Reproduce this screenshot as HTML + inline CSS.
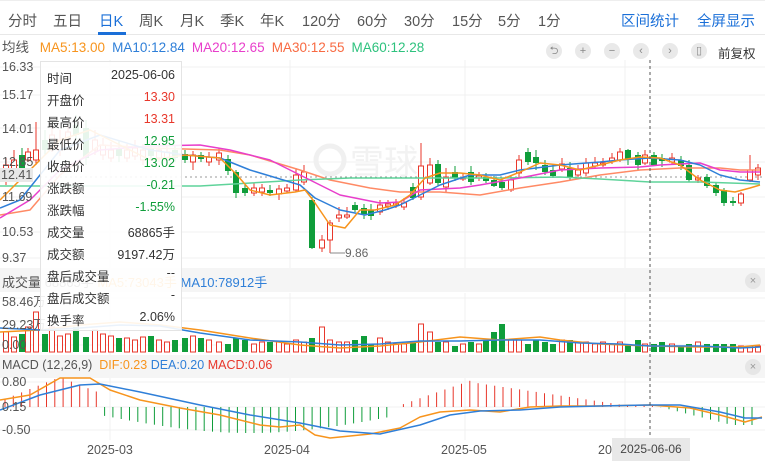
<!DOCTYPE html>
<html><head><meta charset="utf-8"><style>
*{margin:0;padding:0;box-sizing:border-box}
body{width:765px;height:468px;background:#fff;font-family:"Liberation Sans","Noto Sans CJK SC",sans-serif;position:relative;overflow:hidden;color:#333}
.tabs{position:absolute;left:0;top:0;width:765px;height:35px;border-bottom:1px solid #e8e8e8;border-top:1px solid #eee}
.tabs span{position:absolute;top:9px;font-size:14.5px;color:#555}
.tabs .act{color:#1a6fd8}
.tabs .r{color:#1a6fd8}
.ma{position:absolute;top:36px;left:0;font-size:13.5px;white-space:nowrap}
.ma span{margin-right:7px}
.lbl{position:absolute;font-size:12.5px;color:#555;left:2px}
.band{position:absolute;left:0;width:765px;background:#f5f5f5}
.tip{position:absolute;left:40px;top:61px;width:142px;height:270px;background:rgba(255,255,255,0.9);border:1px solid #e4e4e4;font-size:12.5px}
.tip div{position:absolute;left:6px;right:6px;height:18px}
.tip b{font-weight:normal;position:absolute;right:0}
.btn{position:absolute;top:43px;width:16px;height:16px;border-radius:8px;background:#e9e9e9;font-size:11px;color:#888;text-align:center;line-height:16px}
.x{position:absolute;width:16px;height:16px;border-radius:8px;background:#e6e6e6;color:#999;font-size:11px;text-align:center;line-height:16px;left:745px}
</style></head><body>
<div class="tabs">
<span style="left:8px">分时</span><span style="left:53px">五日</span><span class="act" style="left:99px">日K</span>
<span style="left:139px">周K</span><span style="left:180px">月K</span><span style="left:220px">季K</span><span style="left:260px">年K</span>
<span style="left:302px">120分</span><span style="left:357px">60分</span><span style="left:404px">30分</span><span style="left:452px">15分</span><span style="left:498px">5分</span><span style="left:538px">1分</span>
<span class="r" style="left:621px">区间统计</span><span class="r" style="left:697px">全屏显示</span>
<div style="position:absolute;left:98px;top:31px;width:28px;height:3px;background:#1a6fd8"></div>
</div>
<div class="ma"><span style="color:#555;margin-left:2px">均线</span> <span style="color:#f7941d">MA5:13.00</span><span style="color:#2f7fd8">MA10:12.84</span><span style="color:#e83ecb">MA20:12.65</span><span style="color:#f86a42">MA30:12.55</span><span style="color:#2ec27e">MA60:12.28</span></div>
<div class="btn" style="left:546px">⮌</div><div class="btn" style="left:575px">+</div><div class="btn" style="left:604px">−</div><div class="btn" style="left:633px">‹</div><div class="btn" style="left:662px">›</div><div class="btn" style="left:691px">▯</div>
<div style="position:absolute;left:718px;top:43px;font-size:12.5px;color:#333">前复权</div>

<div class="band" style="top:268px;height:24px"></div>
<div class="band" style="top:355px;height:23px"></div>
<svg id="sv" width="765" height="468" style="position:absolute;left:0;top:0"></svg>

<div class="lbl" style="top:60px">16.33</div>
<div class="lbl" style="top:88px">15.17</div>
<div class="lbl" style="top:122px">14.01</div>
<div class="lbl" style="top:155px">12.85</div>
<div class="lbl" style="top:168px;background:#e8e8e8;padding:0 1px;left:0">12.41</div>
<div class="lbl" style="top:190px">11.69</div>
<div class="lbl" style="top:225px">10.53</div>
<div class="lbl" style="top:251px">9.37</div>
<div style="position:absolute;left:345px;top:246px;font-size:12px;color:#666">9.86</div>
<div style="position:absolute;left:2px;top:272px;font-size:13px;white-space:nowrap;color:#555">成交量 68865手 <span style="color:#f7941d">MA5:73043手</span> <span style="color:#2f7fd8">MA10:78912手</span></div>
<div class="x" style="top:273px">×</div>
<div class="lbl" style="top:291px">58.46万</div>
<div class="lbl" style="top:314px">29.23万</div>
<div class="lbl" style="top:338px">0.00</div>
<div style="position:absolute;left:2px;top:358px;font-size:12.5px;white-space:nowrap;color:#555">MACD (12,26,9) &nbsp;<span style="color:#f7941d">DIF:0.23</span> <span style="color:#2f7fd8">DEA:0.20</span> <span style="color:#e8372b">MACD:0.06</span></div>
<div class="x" style="top:359px">×</div>
<div class="lbl" style="top:375px">0.80</div>
<div class="lbl" style="top:400px">0.15</div>
<div class="lbl" style="top:423px">-0.50</div>
<div class="lbl" style="top:443px;left:87px">2025-03</div>
<div class="lbl" style="top:443px;left:264px">2025-04</div>
<div class="lbl" style="top:443px;left:441px">2025-05</div>
<div class="lbl" style="top:443px;left:598px">20</div>
<div style="position:absolute;left:612px;top:438px;width:78px;height:23px;background:#e8e8e8;font-size:12px;color:#444;line-height:23px;text-align:center">2025-06-06</div>

<div class="tip">
<div style="top:6px">时间<b style="color:#333">2025-06-06</b></div>
<div style="top:28px">开盘价<b style="color:#e8372b">13.30</b></div>
<div style="top:50px">最高价<b style="color:#e8372b">13.31</b></div>
<div style="top:72px">最低价<b style="color:#0f9d3a">12.95</b></div>
<div style="top:94px">收盘价<b style="color:#0f9d3a">13.02</b></div>
<div style="top:116px">涨跌额<b style="color:#0f9d3a">-0.21</b></div>
<div style="top:138px">涨跌幅<b style="color:#0f9d3a">-1.55%</b></div>
<div style="top:160px">成交量<b>68865手</b></div>
<div style="top:182px">成交额<b>9197.42万</b></div>
<div style="top:204px">盘后成交量<b>--</b></div>
<div style="top:226px">盘后成交额<b>-</b></div>
<div style="top:248px">换手率<b>2.06%</b></div>
</div>

<script>
var s='';
function L(x1,y1,x2,y2,c,w,d){s+='<line x1="'+x1+'" y1="'+y1+'" x2="'+x2+'" y2="'+y2+'" stroke="'+c+'" stroke-width="'+(w||1)+'"'+(d?' stroke-dasharray="'+d+'"':'')+'/>';}
function P(pts,c){s+='<polyline fill="none" stroke="'+c+'" stroke-width="1.5" stroke-linejoin="round" points="'+pts.map(function(p){return p.join(',')}).join(' ')+'"/>';}
[67,95,128,162,197,232,258].forEach(function(y){L(0,y,765,y,'#f0f0f0');});
[298,321,345].forEach(function(y){L(0,y,765,y,'#f0f0f0');});
[382,407,430].forEach(function(y){L(0,y,765,y,'#f0f0f0');});
[110,290,465,625].forEach(function(x){L(x,60,x,268,'#f0f0f0');L(x,293,x,355,'#f0f0f0');L(x,378,x,440,'#f0f0f0');});
L(40,177,765,177,'#999',1,'2,3');
s+='<circle cx="330" cy="160" r="14" fill="none" stroke="#f0f0f0" stroke-width="5"/><text x="350" y="174" font-size="34" fill="#f2f2f2" font-family="Noto Sans CJK SC">雪球</text>';
var C=[[6,165,180,'r',158,185],[14,160,172,'r',150,176],[22,155,168,'g',148,172],[28,152,160,'r',148,162],[36,150,160,'r',122,165],[45,140,150,'g',130,155],[52,135,148,'r',125,152],[60,140,150,'r',130,156],[68,132,140,'r',125,145],[76,125,135,'g',115,140],[86,128,158,'g',120,165],[95,140,150,'r',130,155],[103,145,155,'r',138,160],[111,150,158,'r',142,162],[119,148,156,'g',140,162],[127,150,158,'r',144,162],[135,148,156,'r',140,160],[143,150,160,'r',144,165],[151,148,156,'g',140,160],[159,150,158,'r',144,162],[167,152,160,'r',146,166],[175,150,158,'g',145,162],[185,154,160,'g',150,163],[193,155,162,'r',151,170],[201,155,159,'g',152,162],[209,157,162,'r',152,166],[219,153,160,'r',148,165],[228,159,171,'g',155,175],[236,172,193,'g',170,198],[245,188,193,'g',184,196],[254,188,193,'r',183,196],[262,188,192,'r',184,196],[270,190,193,'g',185,196],[279,189,194,'r',185,200],[287,188,191,'r',184,193],[296,175,190,'r',168,192],[304,172,182,'r',165,185],[312,200,248,'g',197,249],[322,240,248,'r',235,252],[330,223,240,'r',220,253],[339,215,218,'r',207,222],[347,215,217,'r',207,219],[355,205,210,'g',202,212],[364,208,214,'g',204,219],[371,210,216,'g',204,220],[380,205,212,'r',200,215],[388,204,206,'r',200,210],[396,203,205,'r',199,208],[404,203,207,'r',198,210],[413,187,198,'g',183,200],[421,166,197,'r',143,200],[430,165,183,'r',158,185],[438,164,183,'g',160,186],[446,177,187,'r',168,192],[455,172,178,'g',166,181],[463,178,179,'r',173,181],[471,172,182,'g',166,185],[479,176,178,'r',172,181],[486,177,181,'g',173,183],[494,180,186,'g',176,187],[502,182,188,'g',178,190],[511,180,190,'r',177,192],[519,160,173,'r',155,178],[528,152,162,'g',148,165],[536,157,163,'g',150,170],[545,165,172,'g',160,175],[553,170,176,'g',165,178],[562,164,169,'r',158,172],[570,168,178,'g',162,180],[578,170,175,'r',165,177],[586,163,173,'r',158,176],[595,163,166,'r',157,168],[603,163,165,'r',158,167],[612,158,161,'r',153,164],[620,152,160,'r',148,162],[628,150,160,'g',149,165],[638,155,165,'g',152,170],[645,155,163,'r',150,165],[654,155,165,'g',152,166],[662,158,161,'g',154,167],[672,158,162,'r',153,165],[681,160,166,'g',156,170],[689,165,180,'g',160,182],[698,178,180,'r',175,183],[707,177,186,'g',174,188],[716,185,193,'g',182,196],[724,190,203,'g',188,206],[733,201,203,'g',197,206],[741,194,203,'r',192,206],[750,170,180,'r',155,182],[758,168,175,'r',164,180]];
var R='#e8372b',G='#0f9d3a';
C.forEach(function(c){var col=c[3]=='r'?R:G;L(c[0],c[4],c[0],c[5],col);
 if(c[3]=='r')s+='<rect x="'+(c[0]-2.5)+'" y="'+c[1]+'" width="5" height="'+Math.max(1,c[2]-c[1])+'" fill="#fff" stroke="'+R+'"/>';
 else s+='<rect x="'+(c[0]-3)+'" y="'+c[1]+'" width="6" height="'+Math.max(1,c[2]-c[1])+'" fill="'+G+'"/>';
});
L(330,253,345,253,'#888');
P([[0,215],[30,210],[60,175],[100,145],[150,148],[220,150],[250,155],[300,170],[330,180],[370,188],[400,192],[440,192],[480,195],[520,188],[560,182],[600,175],[640,170],[680,168],[720,168],[740,170],[760,170]],'#ff8a65');
P([[0,186],[100,186],[200,186],[300,180],[350,178],[400,178],[450,178],[500,178],[560,177],[600,179],[650,182],[700,182],[760,184]],'#5fd39a');
P([[0,218],[30,200],[60,170],[100,150],[150,146],[200,145],[230,150],[270,160],[310,180],[340,195],[380,203],[400,202],[420,190],[460,188],[480,185],[520,178],[560,170],[600,168],[640,167],[660,165],[700,163],[720,170],[740,172],[760,172]],'#e83ecb');
P([[0,208],[20,200],[60,150],[100,135],[150,150],[185,155],[220,158],[250,170],[300,185],[315,198],[340,210],[365,215],[385,210],[400,205],[420,195],[440,185],[470,175],[500,175],[520,170],[560,165],[600,162],[620,160],[650,158],[680,160],[700,165],[720,175],[740,180],[760,182]],'#2f7fd8');
P([[0,200],[30,170],[60,140],[90,130],[120,145],[150,160],[185,155],[220,158],[237,175],[250,190],[270,195],[295,192],[305,190],[313,200],[330,225],[345,228],[360,210],[375,210],[395,205],[410,195],[425,178],[440,173],[460,173],[480,175],[500,180],[520,172],[540,163],[560,165],[580,170],[600,165],[620,160],[640,157],[660,158],[680,165],[700,180],[720,190],[735,192],[750,188],[760,185]],'#f7941d');
var hs=[20,15,18,25,40,18,25,16,18,25,15,22,18,16,14,14,12,15,16,12,10,12,14,16,14,12,10,8,14,12,8,10,10,10,8,12,10,14,25,12,10,10,12,16,8,14,10,8,8,10,28,20,10,10,6,8,10,8,12,20,28,12,12,8,12,10,8,12,12,10,10,8,10,8,10,8,12,8,8,10,8,6,8,10,8,8,8,8,6,6,6,6,6,6,6,12,8];
C.forEach(function(c,i){var h=hs[i]||8;
 if(c[3]=='r')s+='<rect x="'+(c[0]-2.5)+'" y="'+(352-h)+'" width="5" height="'+h+'" fill="#fff" stroke="'+R+'"/>';
 else s+='<rect x="'+(c[0]-3)+'" y="'+(352-h)+'" width="6" height="'+h+'" fill="'+G+'"/>';});
P([[0,332],[40,330],[80,325],[120,322],[160,325],[200,330],[250,338],[300,345],[340,348],[380,346],[420,342],[460,337],[500,340],[540,337],[560,340],[600,344],[650,346],[700,347],[740,347],[760,345]],'#f7941d');
P([[0,328],[40,330],[80,328],[120,325],[160,326],[200,333],[250,340],[300,342],[340,345],[380,344],[420,341],[460,341],[500,340],[540,340],[580,343],[620,344],[650,346],[700,346],[740,348],[760,347]],'#2f7fd8');
for(var x=5;x<760;x+=8.3){var v;
 if(x<100)v=-(30-Math.abs(x-60)*0.4);else if(x<395)v=8+Math.sin((x-100)/300*Math.PI)*18;else if(x<650)v=-(x<470?(x-395)*0.35:Math.max(2,25-(x-470)*0.15));else v=Math.min(18,(x-660)*0.25);
 L(x.toFixed(1),407,x.toFixed(1),(407+v).toFixed(1),v<0?R:G);}
P([[0,400],[30,395],[60,378],[90,378],[110,390],[140,400],[180,408],[220,415],[260,425],[280,427],[300,425],[315,435],[330,438],[370,434],[400,428],[420,417],[440,412],[470,410],[500,412],[530,407],[560,406],[600,406],[650,405],[690,408],[720,415],[745,422],[762,417]],'#f7941d');
P([[0,410],[40,395],[80,385],[100,384],[140,392],[200,405],[250,415],[300,423],[340,431],[380,434],[420,425],[450,415],[480,411],[520,410],[560,407],[600,406],[650,405],[680,405],[720,412],[745,418],[762,418]],'#2f7fd8');
L(650,60,650,440,'#555',1,'3,3');
document.getElementById('sv').innerHTML=s;
</script>
</body></html>
